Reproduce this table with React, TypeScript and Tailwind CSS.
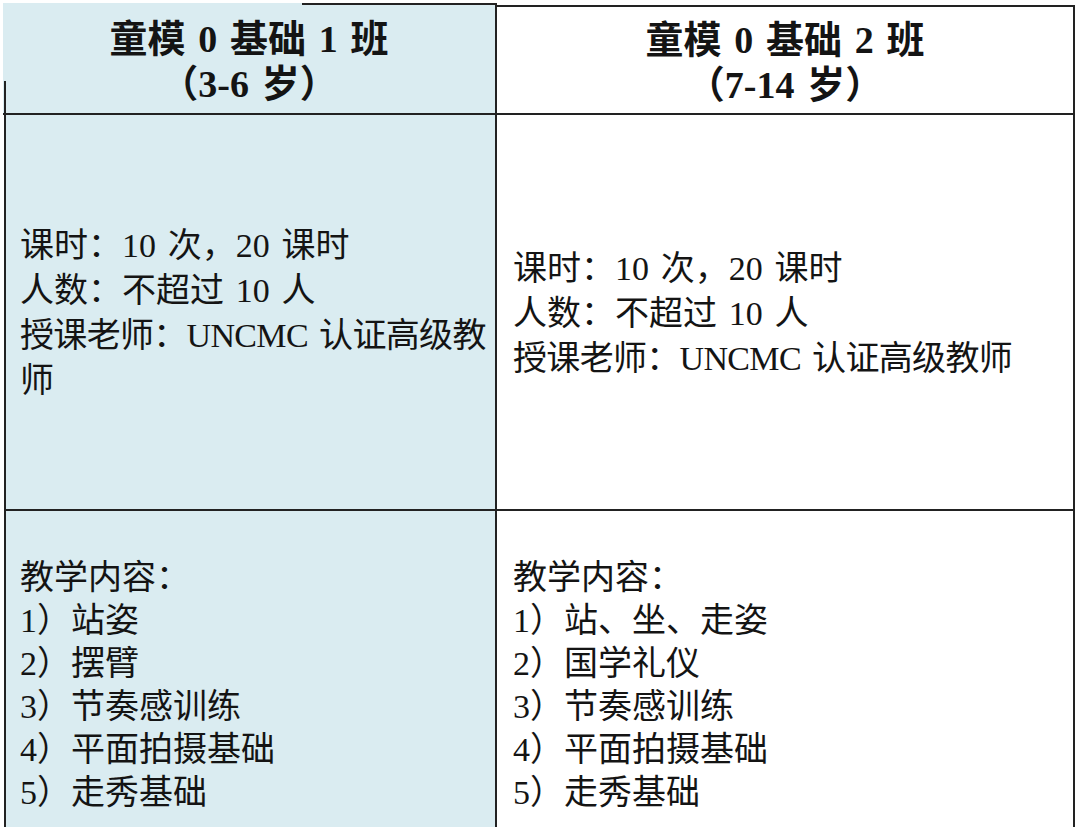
const font = "font-['Liberation_Serif','Noto_Sans_CJK_SC',serif]";

function Info() {
  return (
    <>
      <p>课时：10 次，20 课时</p>
      <p>人数：不超过 10 人</p>
      <p className="tracking-[-0.02em] [word-spacing:0.1em]">授课老师：UNCMC 认证高级教师</p>
    </>
  );
}

export default function App() {
  return (
    <div className={`w-[1080px] h-[827px] overflow-hidden bg-white text-[#141414] ${font} [word-spacing:0.2em]`}>
      <div className="ml-[4px] mt-[5px] w-[1071px] grid grid-cols-[493px_578px]">
        {/* Header row */}
        <div className="relative -mt-[2px] -ml-[1px] pt-[8px] bg-[#daecf1] border-b-2 border-r-2 border-[#222] h-[112px] flex flex-col items-center justify-center">
          <span className="absolute left-[299px] right-0 top-0 h-[2px] bg-[#222]" />
          <span className="absolute left-[1px] top-[78px] bottom-0 w-[2px] bg-[#222]" />
          <p className="text-[38px] font-bold leading-[45px]">童模 0 基础 1 班</p>
          <p className="text-[38px] font-bold leading-[45px]">（3-6 岁）</p>
        </div>
        <div className="border-t-2 border-r-2 border-b-2 border-[#222] h-[110px] pt-[6px] flex flex-col items-center justify-center">
          <p className="text-[38px] font-bold leading-[45px]">童模 0 基础 2 班</p>
          <p className="text-[38px] font-bold leading-[45px]">（7-14 岁）</p>
        </div>

        {/* Info row */}
        <div className="bg-[#daecf1] border-l-2 border-r-2 border-b-2 border-[#222] h-[396px] flex flex-col justify-center pl-[14px] pt-[2px] text-[34px] leading-[45px]">
          <Info />
        </div>
        <div className="border-r-2 border-b-2 border-[#222] h-[396px] flex flex-col justify-center pl-[16px] pt-[2px] text-[34px] leading-[45px]">
          <Info />
        </div>

        {/* Content row */}
        <div className="bg-[#daecf1] border-l-2 border-r-2 border-[#222] h-[330px] pl-[14px] pt-[45px] text-[34px] leading-[43px]">
          <p>教学内容：</p>
          <p>1）站姿</p>
          <p>2）摆臂</p>
          <p>3）节奏感训练</p>
          <p>4）平面拍摄基础</p>
          <p>5）走秀基础</p>
        </div>
        <div className="border-r-2 border-[#222] h-[330px] pl-[16px] pt-[45px] text-[34px] leading-[43px]">
          <p>教学内容：</p>
          <p>1）站、坐、走姿</p>
          <p>2）国学礼仪</p>
          <p>3）节奏感训练</p>
          <p>4）平面拍摄基础</p>
          <p>5）走秀基础</p>
        </div>
      </div>
    </div>
  );
}
